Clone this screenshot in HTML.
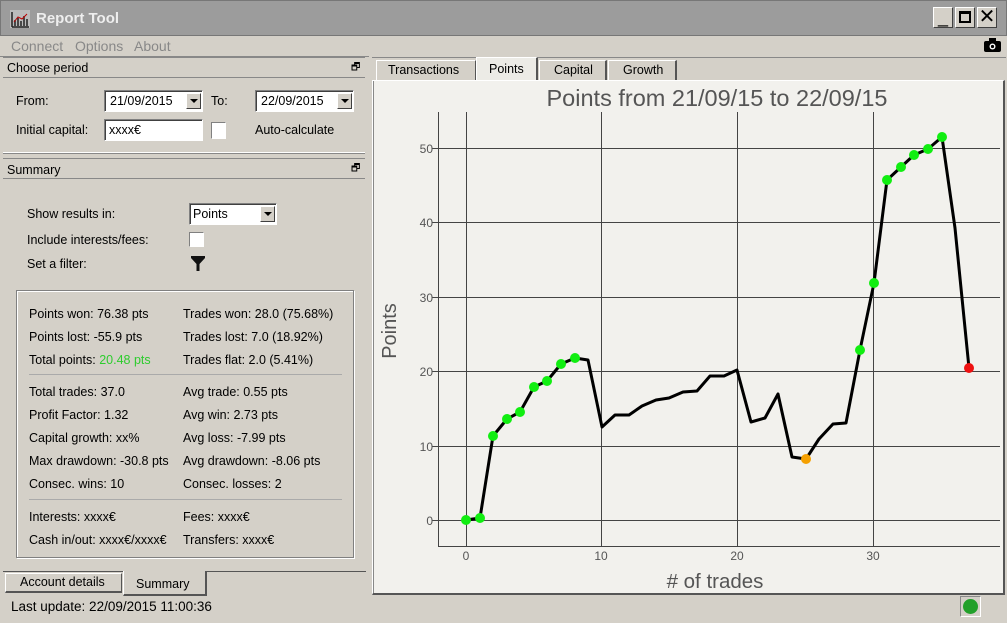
<!DOCTYPE html>
<html><head><meta charset="utf-8"><style>
*{margin:0;padding:0;box-sizing:border-box}
body{width:1007px;height:623px;background:#d4d0c8;font-family:"Liberation Sans","DejaVu Sans",sans-serif;font-size:12.5px;color:#000;position:relative;overflow:hidden}
.a{position:absolute;white-space:nowrap}
.in{position:absolute;background:#fff;border:1px solid #808080;border-right-color:#fff;border-bottom-color:#fff;box-shadow:inset 1px 1px 0 #404040}
.dd{position:absolute;width:15px;height:16px;background:#d4d0c8;border:1px solid #fff;border-right-color:#404040;border-bottom-color:#404040}
.dd:after{content:"";position:absolute;left:3px;top:5px;border:4px solid transparent;border-top:4px solid #000}
.cb{position:absolute;width:15px;height:15px;background:#fff;border:1px solid #808080;border-right-color:#fff;border-bottom-color:#fff}
.hd{position:absolute;left:3px;width:362px;height:21px;border-top:1px solid #888;border-bottom:1px solid #888;background:#d4d0c8}
.wb{position:absolute;top:7px;width:20px;height:21px;background:#d4d0c8;border:1px solid #fff;border-right-color:#404040;border-bottom-color:#404040;font-size:18px;text-align:center;line-height:18px}
</style></head><body>
<div class="a" style="left:0;top:0;width:1007px;height:36px;background:#9c9c9c;border:1px solid #777"></div>
<svg class="a" style="left:10px;top:10px" width="20" height="18"><rect x="0" y="0" width="20" height="18" fill="#bbb"/><path d="M2 17V2M2 17H19M5 16V10M8 16V8M11 16V11M14 16V6M17 16V9" stroke="#222" stroke-width="1.5"/><path d="M4 12L8 7L12 9L17 4" stroke="#b00" fill="none"/></svg>
<div class="a" style="left:36px;top:10px;font-size:15px;font-weight:bold;color:#eee">Report Tool</div>
<div class="wb" style="left:933px">_</div>
<div class="wb" style="left:955px"><div style="position:absolute;left:3px;top:3px;width:12px;height:12px;border:2px solid #000;border-top-width:3px"></div></div>
<div class="wb" style="left:977px;font-size:20px">✕</div>
<div class="a" style="left:11px;top:38px;font-size:14px;color:#888">Connect</div>
<div class="a" style="left:75px;top:38px;font-size:14px;color:#888">Options</div>
<div class="a" style="left:134px;top:38px;font-size:14px;color:#888">About</div>
<svg class="a" style="left:984px;top:38px" width="17" height="14"><rect x="0" y="3" width="17" height="11" rx="2" fill="#000"/><rect x="5" y="0" width="7" height="4" fill="#000"/><circle cx="8.5" cy="8.5" r="3" fill="#fff"/><circle cx="8.5" cy="8.5" r="1.6" fill="#000"/></svg>
<div class="a" style="left:0;top:56px;width:369px;height:1px;background:#888"></div>
<div class="hd" style="top:57px"></div>
<div class="a" style="left:7px;top:61px">Choose period</div>
<div class="a" style="left:351px;top:60px;font-size:10px">🗗</div>
<div class="a" style="left:16px;top:94px">From:</div>
<div class="in" style="left:104px;top:90px;width:99px;height:22px"></div>
<div class="a" style="left:110px;top:94px">21/09/2015</div>
<div class="dd" style="left:186px;top:93px"></div>
<div class="a" style="left:211px;top:94px">To:</div>
<div class="in" style="left:255px;top:90px;width:99px;height:22px"></div>
<div class="a" style="left:261px;top:94px">22/09/2015</div>
<div class="dd" style="left:337px;top:93px"></div>
<div class="a" style="left:16px;top:123px">Initial capital:</div>
<div class="in" style="left:104px;top:119px;width:99px;height:22px"></div>
<div class="a" style="left:109px;top:123px">xxxx€</div>
<div class="cb" style="left:211px;top:122px;height:17px"></div>
<div class="a" style="left:255px;top:123px">Auto-calculate</div>
<div class="a" style="left:3px;top:152px;width:362px;height:2px;border-top:1px solid #fff;border-bottom:1px solid #888"></div>
<div class="hd" style="top:158px"></div>
<div class="a" style="left:7px;top:163px">Summary</div>
<div class="a" style="left:351px;top:161px;font-size:10px">🗗</div>
<div class="a" style="left:27px;top:207px">Show results in:</div>
<div class="in" style="left:189px;top:203px;width:88px;height:22px"></div>
<div class="a" style="left:193px;top:207px">Points</div>
<div class="dd" style="left:260px;top:206px"></div>
<div class="a" style="left:27px;top:233px">Include interests/fees:</div>
<div class="cb" style="left:189px;top:232px"></div>
<div class="a" style="left:27px;top:257px">Set a filter:</div>
<svg class="a" style="left:191px;top:256px" width="14" height="16"><path d="M0 0H14V2L8.5 8V15H5.5V8L0 2Z" fill="#111"/></svg>
<div class="a" style="left:16px;top:290px;width:338px;height:268px;border:1px solid #808080;box-shadow:1px 1px 0 #fff,inset 1px 1px 0 #fff"></div>
<div class="a" style="left:29px;top:303px;line-height:23px">Points won: 76.38 pts<br>Points lost: -55.9 pts<br>Total points: <span style="color:#2ecc2e">20.48 pts</span></div>
<div class="a" style="left:183px;top:303px;line-height:23px">Trades won: 28.0 (75.68%)<br>Trades lost: 7.0 (18.92%)<br>Trades flat: 2.0 (5.41%)</div>
<div class="a" style="left:29px;top:374px;width:313px;height:1px;background:#aaa"></div>
<div class="a" style="left:29px;top:381px;line-height:23px">Total trades: 37.0<br>Profit Factor: 1.32<br>Capital growth: xx%<br>Max drawdown: -30.8 pts<br>Consec. wins: 10</div>
<div class="a" style="left:183px;top:381px;line-height:23px">Avg trade: 0.55 pts<br>Avg win: 2.73 pts<br>Avg loss: -7.99 pts<br>Avg drawdown: -8.06 pts<br>Consec. losses: 2</div>
<div class="a" style="left:29px;top:499px;width:313px;height:1px;background:#aaa"></div>
<div class="a" style="left:29px;top:506px;line-height:23px">Interests: xxxx€<br>Cash in/out: xxxx€/xxxx€</div>
<div class="a" style="left:183px;top:506px;line-height:23px">Fees: xxxx€<br>Transfers: xxxx€</div>
<div class="a" style="left:3px;top:571px;width:363px;height:1px;background:#555"></div>
<div class="a" style="left:5px;top:573px;width:117px;height:20px;border:1px solid #fff;border-right-color:#555;border-bottom:2px solid #555"></div>
<div class="a" style="left:20px;top:575px">Account details</div>
<div class="a" style="left:123px;top:571px;width:84px;height:25px;background:#d4d0c8;border-left:1px solid #fff;border-right:2px solid #555;border-bottom:2px solid #555"></div>
<div class="a" style="left:136px;top:577px">Summary</div>
<div class="a" style="left:11px;top:599px;font-size:13.5px">Last update: 22/09/2015 11:00:36</div>
<div class="a" style="left:960px;top:596px;width:21px;height:21px;border:1px solid #888;border-right-color:#fff;border-bottom-color:#fff"></div>
<div class="a" style="left:963px;top:599px;width:15px;height:15px;border-radius:50%;background:#22a02a"></div>
<div class="a" style="left:372px;top:57px;width:634px;height:1px;background:#888"></div>
<div class="a" style="left:376px;top:60px;width:100px;height:20px;border:1px solid #fff;border-right-color:#555;border-bottom:none"></div>
<div class="a" style="left:388px;top:63px">Transactions</div>
<div class="a" style="left:476px;top:57px;width:62px;height:24px;background:#ecebe6;border:1px solid #fff;border-right:2px solid #555;border-bottom:none"></div>
<div class="a" style="left:489px;top:62px">Points</div>
<div class="a" style="left:539px;top:60px;width:68px;height:20px;border:1px solid #fff;border-right:2px solid #555;border-bottom:none"></div>
<div class="a" style="left:554px;top:63px">Capital</div>
<div class="a" style="left:608px;top:60px;width:69px;height:20px;border:1px solid #fff;border-right:2px solid #555;border-bottom:none"></div>
<div class="a" style="left:623px;top:63px">Growth</div>
<div class="a" style="left:372px;top:80px;width:633px;height:515px;background:#f2f1ed;border:1px solid #fff;border-right:2px solid #555;border-bottom:2px solid #555;box-shadow:inset 1px 0 0 #888"></div>
<svg class="a" style="left:0;top:0" width="1007" height="623">
<g font-family="Liberation Sans,DejaVu Sans,sans-serif">
<text x="717" y="106" font-size="23.5" fill="#555" text-anchor="middle">Points from 21/09/15 to 22/09/15</text>
<g stroke="#444" stroke-width="1">
<line x1="438.5" y1="112" x2="438.5" y2="546"/>
<line x1="438" y1="546.5" x2="1000" y2="546.5"/>
<line x1="466.5" y1="112" x2="466.5" y2="546"/>
<line x1="601.5" y1="112" x2="601.5" y2="546"/>
<line x1="737.5" y1="112" x2="737.5" y2="546"/>
<line x1="873.5" y1="112" x2="873.5" y2="546"/>
<line x1="432" y1="520.5" x2="1000" y2="520.5"/>
<line x1="432" y1="446.5" x2="1000" y2="446.5"/>
<line x1="432" y1="371.5" x2="1000" y2="371.5"/>
<line x1="432" y1="297.5" x2="1000" y2="297.5"/>
<line x1="432" y1="222.5" x2="1000" y2="222.5"/>
<line x1="432" y1="148.5" x2="1000" y2="148.5"/>
</g>
<g font-size="12" fill="#555" text-anchor="end">
<text x="433" y="525">0</text><text x="433" y="451">10</text><text x="433" y="376">20</text><text x="433" y="302">30</text><text x="433" y="227">40</text><text x="433" y="153">50</text>
</g>
<g font-size="12" fill="#555" text-anchor="middle">
<text x="466" y="560">0</text><text x="601" y="560">10</text><text x="737" y="560">20</text><text x="873" y="560">30</text>
</g>
<text x="715" y="588" font-size="20.5" fill="#555" text-anchor="middle"># of trades</text>
<text transform="translate(396,331) rotate(-90)" font-size="20" fill="#555" text-anchor="middle">Points</text>
</g>
<polyline fill="none" stroke="#000" stroke-width="3" stroke-linejoin="round" points="466,520 480,518 493,436 507,419 520,412 534,387 547,381 561,364 575,358 588,360 602,427 615,415 629,415 642,406 656,400 669,398 683,392 697,391 710,376 724,376 737,370 751,422 765,418 778,394 792,457 806,459 819,439 833,424 846,423 860,350 874,283 887,180 901,167 914,155 928,149 942,137 955,228 969,368"/>
<g fill="#11ee11">
<circle cx="466" cy="520" r="5"/><circle cx="480" cy="518" r="5"/><circle cx="493" cy="436" r="5"/><circle cx="507" cy="419" r="5"/><circle cx="520" cy="412" r="5"/><circle cx="534" cy="387" r="5"/><circle cx="547" cy="381" r="5"/><circle cx="561" cy="364" r="5"/><circle cx="575" cy="358" r="5"/><circle cx="860" cy="350" r="5"/><circle cx="874" cy="283" r="5"/><circle cx="887" cy="180" r="5"/><circle cx="901" cy="167" r="5"/><circle cx="914" cy="155" r="5"/><circle cx="928" cy="149" r="5"/><circle cx="942" cy="137" r="5"/>
</g>
<circle cx="806" cy="459" r="5" fill="#f5a000"/>
<circle cx="969" cy="368" r="5" fill="#ee1111"/>
</svg>
</body></html>
